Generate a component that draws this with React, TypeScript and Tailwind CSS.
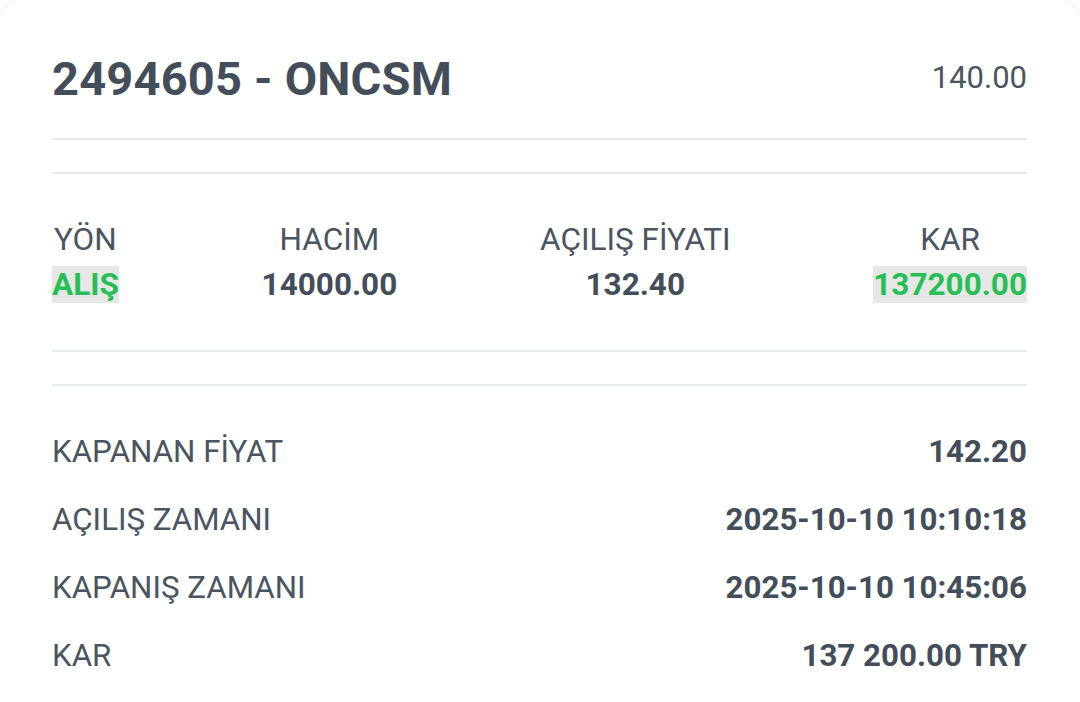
import React from "react";

const Line = () => <div className="h-[2px] w-full bg-[#e4eaee]" />;

export default function App() {
  const stats = [
    { label: "YÖN", value: "ALIŞ", green: true },
    { label: "HACİM", value: "14000.00" },
    { label: "AÇILIŞ FİYATI", value: "132.40" },
    { label: "KAR", value: "137200.00", green: true },
  ];
  const rows = [
    ["KAPANAN FİYAT", "142.20"],
    ["AÇILIŞ ZAMANI", "2025-10-10 10:10:18"],
    ["KAPANIŞ ZAMANI", "2025-10-10 10:45:06"],
    ["KAR", "137 200.00 TRY"],
  ];
  return (
    <div className="w-[1080px] h-[702px] overflow-hidden bg-white font-['Roboto',sans-serif] text-[#444e5a]">
      <div className="-ml-[3px] -mt-[3px] h-[760px] w-[1086px] rounded-t-[30px] border border-[#eeeff0] bg-white pl-[54px] pr-[55px]">
        <div className="flex h-[140px] items-start justify-between pt-[54px]">
          <div className="text-[47px] font-bold leading-[54px] tracking-[0.2px]">2494605 - ONCSM</div>
          <div className="text-[31px] leading-[52px] text-[#4b5561]">140.00</div>
        </div>
        <Line />
        <div className="h-[32px]" />
        <Line />
        <div className="flex justify-between pt-[47px]">
          {stats.map((s) => (
            <div key={s.label} className="flex flex-col items-center">
              <div className="text-[31.5px] leading-[38px] text-[#4b5561]">{s.label}</div>
              <div
                className={
                  "mt-[7px] text-[31.5px] font-bold leading-[37px] " +
                  (s.green ? "bg-[#e6e7e6] text-[#26bf55]" : "")
                }
              >
                {s.value}
              </div>
            </div>
          ))}
        </div>
        <div className="h-[47px]" />
        <Line />
        <div className="h-[32px]" />
        <Line />
        <div className="flex flex-col pt-[32px]">
          {rows.map(([l, v]) => (
            <div key={l} className="flex h-[68px] items-center justify-between">
              <div className="text-[31.3px] text-[#4b5561]">{l}</div>
              <div className="text-[31.3px] font-bold">{v}</div>
            </div>
          ))}
        </div>
      </div>
    </div>
  );
}
